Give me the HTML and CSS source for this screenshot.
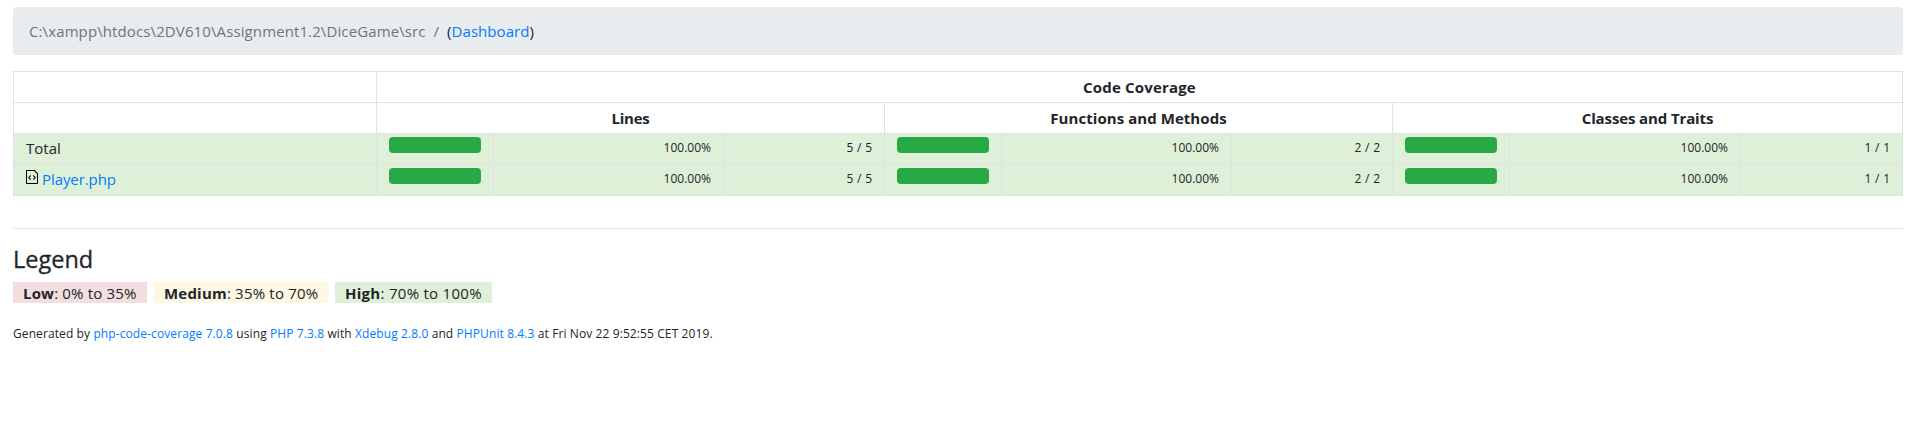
FILE: index.html
```html
<!DOCTYPE html>
<html lang="en">
<head>
<meta charset="UTF-8">
<title>Code Coverage</title>
<link rel="stylesheet" href="styles.css">
</head>
<body>
<header>
<nav class="breadcrumb"><span class="path">C:\xampp\htdocs\2DV610\Assignment1.2\DiceGame\src</span><span class="slash">/</span><span class="dash">(<a href="#">Dashboard</a>)</span></nav>
</header>
<main>
<table class="coverage">
<colgroup><col class="c-name"><col class="c-bar"><col class="c-pct"><col class="c-num"><col class="c-bar"><col class="c-pct"><col class="c-num"><col class="c-bar2"><col class="c-pct2"><col></colgroup>
<thead>
<tr><th></th><th colspan="9"><span class="t-cov">Code Coverage</span></th></tr>
<tr><th></th><th colspan="3"><span class="t-lines">Lines</span></th><th colspan="3"><span class="t-func">Functions and Methods</span></th><th colspan="3"><span class="t-class">Classes and Traits</span></th></tr>
</thead>
<tbody>
<tr><td><span class="total">Total</span></td>
<td><div class="bar"></div></td><td class="num">100.00%</td><td class="num ratio">5 / 5</td>
<td><div class="bar"></div></td><td class="num">100.00%</td><td class="num ratio">2 / 2</td>
<td><div class="bar"></div></td><td class="num">100.00%</td><td class="num ratio">1 / 1</td></tr>
<tr><td><div class="file"><svg class="icon" width="12" height="16" viewBox="0 0 12 16"><path fill-rule="evenodd" d="M8.5 1H1c-.55 0-1 .45-1 1v12c0 .55.45 1 1 1h10c.55 0 1-.45 1-1V4.500L8.500 1zM11 14H1V2h7l3 3v9zM5 6.980L3.500 8.500 5 10l-.5 1L2 8.500 4.500 6l.5.980zM7.500 6L10 8.500 7.500 11l-.5-.980L8.500 8.500 7 7l.5-1z"/></svg><a class="player" href="#">Player.php</a></div></td>
<td><div class="bar"></div></td><td class="num">100.00%</td><td class="num ratio">5 / 5</td>
<td><div class="bar"></div></td><td class="num">100.00%</td><td class="num ratio">2 / 2</td>
<td><div class="bar"></div></td><td class="num">100.00%</td><td class="num ratio">1 / 1</td></tr>
</tbody>
</table>
</main>
<footer>
<hr>
<h4>Legend</h4>
<div class="legend"><span class="tag low"><b>Low</b>: 0% to 35%</span><span class="tag medium"><b>Medium</b>: 35% to 70%</span><span class="tag high"><b>High</b>: 70% to 100%</span></div>
<p class="generated">Generated by <a href="#">php-code-coverage 7.0.8</a> using <a href="#">PHP 7.3.8</a> with <a href="#">Xdebug 2.8.0</a> and <a href="#">PHPUnit 8.4.3</a> at Fri Nov 22 9:52:55 CET 2019.</p>
</footer>
</body>
</html>
```
FILE: styles.css
```css
* { box-sizing: border-box; }
body { margin: 0; padding: 7px 14px 0 13px; background: #fff; color: #212529; font: 15px/24px "Open Sans", "Noto Sans", sans-serif; }
a { color: #007bff; text-decoration: none; }
.breadcrumb { display: flex; height: 48px; padding: 12px 16px; margin-bottom: 16px; border-radius: 4px; background: #e9ecef; white-space: pre; }
.path, .slash { color: #6c757d; }
.path { letter-spacing: .11px; }
.slash { padding: 0 8px; }
.dash { letter-spacing: .05px; }
.coverage { width: 1890px; table-layout: fixed; border-collapse: collapse; }
.c-name { width: 363px; }
.c-bar { width: 117px; }
.c-pct { width: 230px; }
.c-num { width: 161px; }
.c-bar2 { width: 117px; }
.c-pct2 { width: 231px; }
th, td { height: 31px; padding: 3px 12px; border: 1px solid #dee2e6; vertical-align: top; line-height: 24px; }
th { font-weight: 700; text-align: center; }
.t-cov { letter-spacing: .17px; }
.t-lines { letter-spacing: -.2px; }
.t-func { letter-spacing: .06px; }
.t-class { letter-spacing: -.12px; }
tbody td { background: #dff0d8; line-height: 23px; }
.player { letter-spacing: -.08px; }
.bar { height: 16px; border-radius: 4px; background: #28a745; }
.num { font-size: 12px; line-height: 19px; text-align: right; padding-top: 4px; }
.ratio { word-spacing: .6px; }
.file { display: flex; gap: 4px; }
.icon { margin-top: 1px; fill: #000; }
hr { margin: 32px 0 16px; border: 0; border-top: 1px solid #e5e5e5; }
h4 { margin: 0 0 8px; font-size: 23.500px; font-weight: 500; line-height: 29px; -webkit-text-stroke: .3px #212529; }
.legend { display: flex; gap: 7px; height: 24px; margin-bottom: 16px; }
.tag { height: 21px; padding: 0 10px; line-height: 22px; white-space: pre; }
.low { width: 134px; background: #f2dede; letter-spacing: .18px; }
.medium { width: 174px; background: #fcf8e3; letter-spacing: .2px; }
.high { width: 157px; background: #dff0d8; letter-spacing: .28px; }
.generated { margin: 0; font-size: 12px; letter-spacing: .1px; }
```
